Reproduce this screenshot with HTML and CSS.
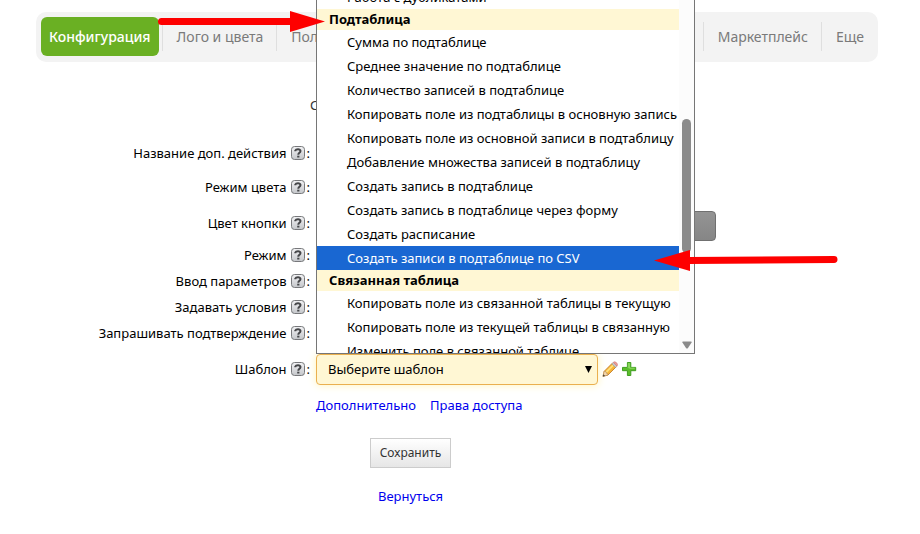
FILE: index.html
```html
<!DOCTYPE html>
<html lang="ru">
<head>
<meta charset="utf-8">
<title>Конфигурация</title>
<link rel="stylesheet" href="styles.css">
</head>
<body>
<nav class="tabs">
  <a class="tab tab-active" href="#">Конфигурация</a>
  <a class="tab" href="#">Лого и цвета</a>
  <a class="tab" href="#">Пол</a>
  <a class="tab tab-far" href="#">Маркетплейс</a>
  <a class="tab" href="#">Еще</a>
</nav>

<svg class="sprite" aria-hidden="true">
  <defs>
    <linearGradient id="help-fill" x1="0" y1="0" x2="0" y2="1"><stop offset="0" stop-color="#f2f2f4"/><stop offset="1" stop-color="#c4c6ca"/></linearGradient>
    <symbol id="help" viewBox="0 0 14 14">
      <rect x=".5" y=".5" width="13" height="13" rx="3" fill="url(#help-fill)" stroke="#77787b"/>
      <path d="M4.3 5.3V4.5Q4.8 3.2 7 3.2T9.5 5Q9.5 6.1 8.3 6.8Q7.3 7.4 7.3 8.7" fill="none" stroke="#454649" stroke-width="2"/>
      <path d="M6.2 9.7h2.2v1.8H6.2z" fill="#454649"/>
    </symbol>
  </defs>
</svg>

<main class="page">
  <form class="form">
    <div class="caption">С</div>
    <div class="row row-tall"><label class="label">Название доп. действия <svg class="help"><use href="#help"/></svg>:</label></div>
    <div class="row row-tall"><label class="label">Режим цвета <svg class="help"><use href="#help"/></svg>:</label></div>
    <div class="row row-color"><label class="label" for="color">Цвет кнопки <svg class="help"><use href="#help"/></svg>:</label>
      <button class="swatch" id="color" type="button" aria-label="Цвет кнопки"></button></div>
    <div class="row"><label class="label">Режим <svg class="help"><use href="#help"/></svg>:</label></div>
    <div class="row"><label class="label">Ввод параметров <svg class="help"><use href="#help"/></svg>:</label></div>
    <div class="row"><label class="label">Задавать условия <svg class="help"><use href="#help"/></svg>:</label></div>
    <div class="row"><label class="label">Запрашивать подтверждение <svg class="help"><use href="#help"/></svg>:</label></div>
    <div class="row row-template">
      <label class="label" for="template">Шаблон <svg class="help"><use href="#help"/></svg>:</label>
      <div class="picker">
        <select class="select" id="template"><option>Выберите шаблон</option></select>
        <svg class="caret" viewBox="0 0 7 7"><path d="M0 0h7L3.5 7z"/></svg>
        <div class="popup">
          <div class="options" role="listbox" aria-label="Шаблон">
            <div class="option" role="option">Работа с дубликатами</div>
            <div class="group">Подтаблица</div>
            <div class="option" role="option">Сумма по подтаблице</div>
            <div class="option" role="option">Среднее значение по подтаблице</div>
            <div class="option" role="option">Количество записей в подтаблице</div>
            <div class="option" role="option">Копировать поле из подтаблицы в основную запись</div>
            <div class="option" role="option">Копировать поле из основной записи в подтаблицу</div>
            <div class="option" role="option">Добавление множества записей в подтаблицу</div>
            <div class="option" role="option">Создать запись в подтаблице</div>
            <div class="option" role="option">Создать запись в подтаблице через форму</div>
            <div class="option" role="option">Создать расписание</div>
            <div class="option option-active" role="option" aria-selected="true">Создать записи в подтаблице по CSV</div>
            <div class="group">Связанная таблица</div>
            <div class="option" role="option">Копировать поле из связанной таблицы в текущую</div>
            <div class="option" role="option">Копировать поле из текущей таблицы в связанную</div>
            <div class="option" role="option">Изменить поле в связанной таблице</div>
          </div>
          <div class="scrollbar">
            <div class="thumb"></div>
            <svg class="scroll-down" viewBox="0 0 10 8"><path d="M1 .5h8q1 0 .6 1L6 7Q5 8 4 7L.4 1.5Q0 .5 1 .5z"/></svg>
          </div>
        </div>
      </div>
      <button class="icon-button" type="button" aria-label="Изменить">
        <svg class="icon" viewBox="0 0 16 16">
          <path d="M1 15.3l1.2-5L10.3 2.2l3.8 3.7L6 14z" fill="#f7b538" stroke="#bd751f" stroke-width=".8"/>
          <path d="M3.5 10.6L10.8 3.4l1.3 1.2-7.3 7.3z" fill="#ffe079"/>
          <path d="M1 15.3l1.2-5 1.7.3.5 1.6 1.3.4.3 1.4z" fill="#f3d6ab" stroke="#a77745" stroke-width=".5"/>
          <path d="M.7 15.6l.7-2.4 1.7 1.7z" fill="#333"/>
          <path d="M9.8 2.8l1.5-1.4 3.7 3.7-1.5 1.4z" fill="#c6c9cc" stroke="#8e8e90" stroke-width=".5"/>
          <path d="M11.3 1.4q1.4-1.5 3.2.3 1.9 1.8.5 3.4z" fill="#ee9c98" stroke="#cc7773" stroke-width=".6"/>
        </svg>
      </button>
      <button class="icon-button" type="button" aria-label="Добавить">
        <svg class="icon" viewBox="0 0 16 16">
          <path d="M6.4 1.5h3.4v4.9h4.9v3.3H9.8v4.8H6.4V9.7H1.5V6.4h4.9z" fill="#5bbd2b" stroke="#3f9e20"/>
          <path d="M7.3 7.2V2.4h1.1v4.8h5.3" fill="none" stroke="#91da65"/>
        </svg>
      </button>
    </div>
    <div class="links"><a href="#">Дополнительно</a><a href="#">Права доступа</a></div>
    <div class="actions">
      <button class="save" type="submit">Сохранить</button>
      <a href="#">Вернуться</a>
    </div>
  </form>
</main>

<svg class="arrows" viewBox="0 0 920 534" aria-hidden="true">
  <path d="M161.5 21.5H292" stroke="#fe0000" stroke-width="7" stroke-linecap="round"/>
  <path d="M290 11l35 10.5L290 32z" fill="#fe0000"/>
  <path d="M834 259.5L688 260.5" stroke="#fe0000" stroke-width="7" stroke-linecap="round"/>
  <path d="M690 250l-36 10.5L690 271z" fill="#fe0000"/>
</svg>
</body>
</html>
```
FILE: styles.css
```css
* { box-sizing: border-box; }

body {
  margin: 0;
  padding-top: 12px;
  background: #fff;
  color: #000;
  font: 13px/20px "Noto Sans", sans-serif;
  overflow: hidden;
}

a { color: #0000ee; text-decoration: none; }
button { padding: 0; font: inherit; }
.sprite { position: absolute; width: 0; height: 0; }

.tabs {
  display: flex;
  align-items: center;
  height: 50px;
  margin: 0 42px 0 36px;
  padding: 0 1px 2px 5px;
  border-radius: 10px;
  background: #f3f3f3;
}
.tab {
  padding: 0 13px 0 14px;
  border-left: 1px solid #dfdfdf;
  color: #7a7a7a;
  font-size: 14px;
  line-height: 29px;
}
.tab-active {
  margin-right: 3px;
  padding: 0 8px;
  border: 0;
  border-radius: 6px;
  background: #6ab023;
  color: #fff;
  font-weight: 500;
  line-height: 39px;
}
.tab-far { margin-left: auto; }

.page { padding-top: 33px; }
.caption { margin-bottom: 21px; padding-left: 310px; color: #333; }

.row { display: flex; align-items: center; min-height: 26px; }
.row-tall { min-height: 34px; }
.row-color { min-height: 38px; }
.row-template { min-height: 46px; }
.label {
  display: flex;
  flex: none;
  align-items: center;
  justify-content: flex-end;
  width: 310px;
  margin-right: 6px;
}
.help { width: 14px; height: 14px; margin: 0 2px 0 4px; }

.swatch {
  width: 400px;
  height: 30px;
  margin-top: 6px;
  border: 1px solid #707070;
  border-radius: 4px;
  background: linear-gradient(#949494, #868686);
}

.picker { position: relative; width: 282px; }
.select {
  display: block;
  width: 100%;
  height: 31px;
  padding: 0 11px;
  border: 1px solid #eab04f;
  border-radius: 4px;
  outline: 0;
  appearance: none;
  background: #fff7d4;
  box-shadow: 0 0 8px #fff3b8;
  color: #000;
  font: inherit;
}
.caret { position: absolute; top: 12px; right: 6px; width: 7px; height: 7px; }

.popup {
  position: absolute;
  bottom: 100%;
  left: 0;
  display: flex;
  width: 379px;
  height: 370px;
  border: 1px solid #767676;
  background: #fff;
}
.options { flex: 1; overflow: hidden; white-space: nowrap; }
.option { padding-left: 30px; line-height: 24px; }
.option-active { background: #1967d2; color: #fff; }
.group {
  padding-left: 12px;
  background: #fff7d4;
  font-weight: 700;
  line-height: 21px;
}
.scrollbar {
  display: flex;
  flex-direction: column;
  align-items: center;
  justify-content: space-between;
  width: 15px;
  padding: 134px 0 4px;
  background: #fcfcfc;
}
.thumb { width: 9px; height: 134px; border-radius: 5px; background: #8b8b8b; }
.scroll-down { width: 10px; height: 8px; fill: #8b8b8b; }

.icon-button {
  height: 16px;
  margin-left: 4px;
  border: 0;
  background: none;
}
.icon-button + .icon-button { margin-left: 3px; }
.icon { display: block; width: 16px; height: 16px; }

.links { display: flex; gap: 14px; margin-top: 3px; padding-left: 316px; }
.actions {
  display: flex;
  flex-direction: column;
  align-items: center;
  gap: 18px;
  margin: 23px 99px 0 0;
}
.save {
  height: 30px;
  padding: 0 9px;
  border: 1px solid #ccc;
  background: linear-gradient(#fff, #e6e6e6);
  color: #333;
  font-size: 12px;
}

.arrows {
  position: absolute;
  top: 0;
  left: 0;
  width: 920px;
  height: 534px;
  pointer-events: none;
}
```
